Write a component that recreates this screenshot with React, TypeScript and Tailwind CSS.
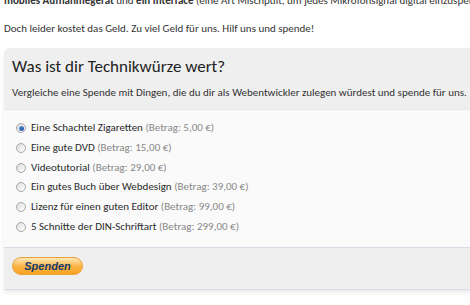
import React from "react";

const options = [
  { label: "Eine Schachtel Zigaretten", amount: "5,00 €", checked: true },
  { label: "Eine gute DVD", amount: "15,00 €" },
  { label: "Videotutorial", amount: "29,00 €" },
  { label: "Ein gutes Buch über Webdesign", amount: "39,00 €" },
  { label: "Lizenz für einen guten Editor", amount: "99,00 €" },
  { label: "5 Schnitte der DIN-Schriftart", amount: "299,00 €" },
];

function Radio({ checked }: { checked?: boolean }) {
  return (
    <span className="flex h-[10px] w-[10px] shrink-0 items-center justify-center rounded-full border border-[#a8a8a8] bg-gradient-to-br from-[#dcdcdc] to-[#ffffff]">
      {checked && (
        <span className="h-[5px] w-[5px] rounded-full bg-gradient-to-br from-[#5a8fd8] to-[#1c4f9c]" />
      )}
    </span>
  );
}

export default function App() {
  return (
    <div className="relative h-[305px] w-[470px] overflow-hidden bg-white font-['Carlito','Liberation_Sans',sans-serif] text-[11px] text-[#333]">
      <p className="-mt-[6px] whitespace-nowrap px-1 leading-[14px]">
        <b>mobiles Aufnahmegerät</b> und <b>ein Interface</b> (eine Art Mischpult, um jedes Mikrofonsignal digital einzuspeisen)
      </p>
      <p className="mt-[14px] whitespace-nowrap px-1 leading-[14px]">
        Doch leider kostet das Geld. Zu viel Geld für uns. Hilf uns und spende!
      </p>

      <div className="ml-1 mt-[12px] w-[480px] rounded-tl-[6px] bg-[#efefef] shadow-[0_3px_4px_rgba(0,0,0,0.08)]">
        <div className="px-2 pb-[9px] pt-[8px]">
          <h3 className="text-[17px] leading-[22px] text-[#222]">Was ist dir Technikwürze wert?</h3>
          <p className="mt-[8px] whitespace-nowrap leading-[14px]">
            Vergleiche eine Spende mit Dingen, die du dir als Webentwickler zulegen würdest und spende für uns.
          </p>
        </div>

        <ul className="flex flex-col gap-[5.8px] border-t border-[#e8e8e8] bg-[#fafafa] px-3 pb-[13px] pt-[11px] leading-[14px]">
          {options.map((o) => (
            <li key={o.label} className="flex h-[14px] items-center gap-[5px] whitespace-nowrap">
              <Radio checked={o.checked} />
              <span>
                <span className="text-[#2a2a2a]">{o.label}</span>{" "}
                <span className="text-[#888]">(Betrag: {o.amount})</span>
              </span>
            </li>
          ))}
        </ul>

        <div className="border-y border-[#d6dde6] bg-[#efefef] px-2 pb-[14px] pt-[9px]">
          <button className="flex h-[18px] w-[71px] items-center justify-center rounded-full border border-[#e9a23b] bg-gradient-to-b from-[#ffe9b4] via-[#fbb545] to-[#f6a21f] font-['Liberation_Sans',sans-serif] text-[11px] font-bold italic text-[#163a6e]">
            Spenden
          </button>
        </div>
      </div>
    </div>
  );
}
